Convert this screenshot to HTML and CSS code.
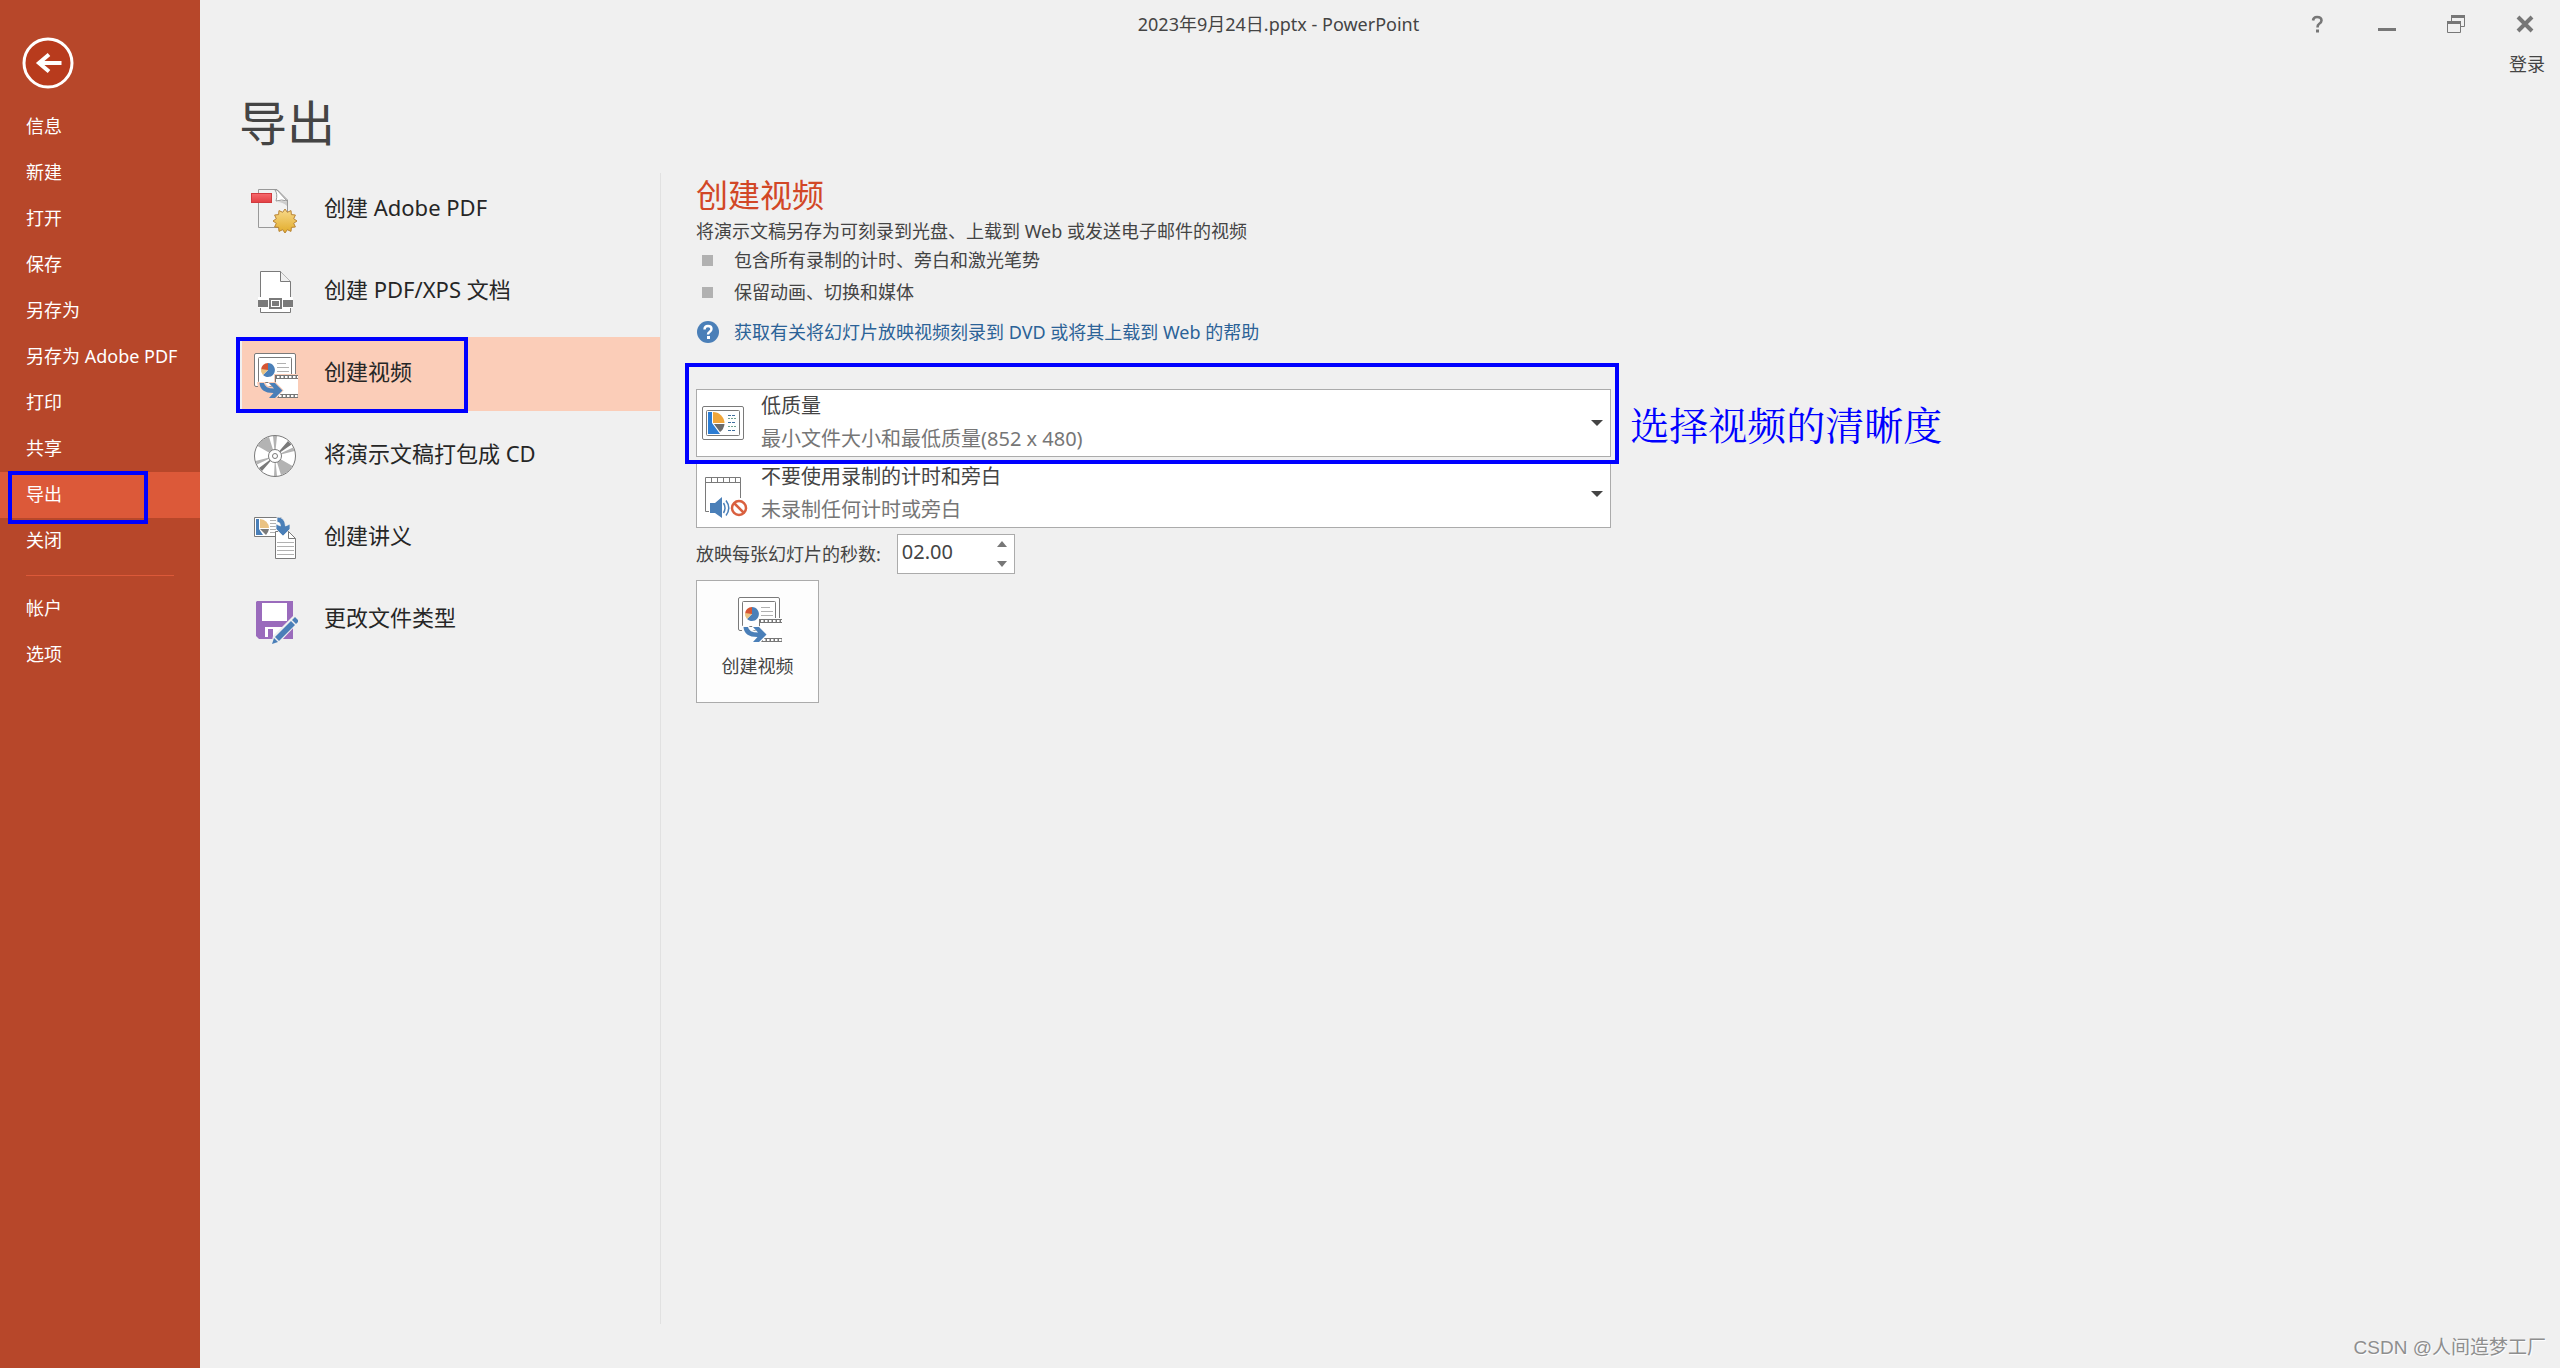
FILE: index.html
```html
<!DOCTYPE html>
<html lang="zh-CN">
  <head>
    <meta charset="UTF-8" />
    <meta name="viewport" content="width=device-width, initial-scale=1.0" />
    <title>2023年9月24日.pptx - PowerPoint</title>
    <link rel="stylesheet" href="styles.css">
  </head>
  <body>
    <!-- Shared icon: slide to film strip -->
    <svg class="sprite" aria-hidden="true">
      <symbol id="icon-video" viewBox="0 0 48 48">
        <g transform="translate(4 3)">
          <rect x="0.5" y="0.5" width="41" height="33" rx="1.5" fill="#fff" stroke="#7a7a7a" />
          <rect x="4.5" y="4.5" width="33" height="25" rx="1" fill="#fff" stroke="#7a7a7a" />
          <path d="M14 17V10A7 7 0 1 1 9 22z" fill="#4a7fb8" />
          <path d="M14 17H7A7 7 0 0 1 14 10z" fill="#d65532" />
          <path d="M14 17L9 22A7 7 0 0 1 7 16z" fill="#eac282" />
          <path d="M23 10.5h9M23 14.5h12M23 18.5h12" stroke="#b1b1b1" />
          <path d="M20 21h26v25H20z" fill="var(--halo)" />
          <path d="M4 29h7q1 5 8 5L14 29h8l8 8.500L22 46h-8l4-4Q5 42 4 29z" fill="var(--halo)" />
          <path d="M21 22h24v23H21z" fill="#777" />
          <path d="M22 26h22v15H22z" fill="#fff" />
          <path d="M23 24h21M25 43h19" stroke="#fff" stroke-width="2" stroke-dasharray="2.500 1.500" />
          <path d="M3 29H11Q12 34 18 34L14 29H21.500L30 37.500L22 46H13L17 41.500Q4 41 3 29z" fill="var(--halo)" />
          <path d="M23 29.500L30 37L23 44V41H44V27H23z" fill="#fff" />
          <path d="M5.500 30H10Q11 35.500 20 35.500L15 30H21L28.500 37.500L21 45H15L19.500 40Q6 40 5.500 30z" fill="#4a7fb8" />
        </g>
      </symbol>
    </svg>

    <nav class="sidebar">
      <button class="back" aria-label="返回">
        <svg viewBox="0 0 52 52">
          <circle cx="26" cy="26" r="24" fill="#b83b1d" stroke="#fff" stroke-width="3" />
          <path d="M39.500 26H16M27 17.500L17 26L27 34.500" fill="none" stroke="#fff" stroke-width="4" />
        </svg>
      </button>
      <a href="#">信息</a>
      <a href="#">新建</a>
      <a href="#">打开</a>
      <a href="#">保存</a>
      <a href="#">另存为</a>
      <a href="#">另存为 Adobe PDF</a>
      <a href="#">打印</a>
      <a href="#">共享</a>
      <a href="#" class="active">导出<i class="mark mark-nav"></i></a>
      <a href="#">关闭</a>
      <hr />
      <a href="#">帐户</a>
      <a href="#">选项</a>
    </nav>

    <div class="page">
      <header class="titlebar">
        <p class="file-name">2023年9月24日.pptx - PowerPoint</p>
        <div class="window-buttons">
          <button aria-label="帮助">
            <svg viewBox="0 0 18 18"><path d="M4 5.500Q4.500 2 8 2Q12.500 2 12.500 5.500Q12.500 7.500 10 9Q8.500 10 8.500 12.500" fill="none" stroke="#777" stroke-width="2.600" /><path d="M7 14.500h3v3H7z" fill="#777" /></svg>
          </button>
          <button aria-label="最小化">
            <svg viewBox="0 0 18 18"><path d="M0 13h18v3H0z" fill="#777" /></svg>
          </button>
          <button aria-label="还原">
            <svg viewBox="0 0 18 18"><path d="M4.500 6V0.500h13v11H14" fill="none" stroke="#777" /><path d="M4 0h14v3H4zM0 6h14v3H0z" fill="#777" /><path d="M0.500 6.500h13v11H0.500z" fill="none" stroke="#777" /></svg>
          </button>
          <button aria-label="关闭">
            <svg viewBox="0 0 18 18"><path d="M2 2L16 16M16 2L2 16" stroke="#777" stroke-width="4" /></svg>
          </button>
        </div>
        <a href="#" class="sign-in">登录</a>
      </header>

      <h1>导出</h1>

      <main class="content">
        <!-- Export types -->
        <div class="types">
          <button>
            <svg viewBox="0 0 48 48">
              <defs>
                <linearGradient id="gold" x2="0" y2="1"><stop stop-color="#f7d98b" /><stop offset="1" stop-color="#e2ac2a" /></linearGradient>
                <linearGradient id="red" x2="0" y2="1"><stop stop-color="#f7696c" /><stop offset="1" stop-color="#e23f43" /></linearGradient>
              </defs>
              <g transform="translate(1 3)">
                <path d="M7.500 0.500H26L36.500 11V38.500H7.500z" fill="#f1f1f1" stroke="#999" />
                <path d="M24 1Q27 5 25 12Q31 10 36 12L26 1z" fill="#fff" stroke="#999" />
                <path d="M26 13Q31 11 36 13V17Q32 13 26 13z" fill="#ccc" />
                <rect x="0.500" y="4.500" width="20" height="9" fill="url(#red)" stroke="#d13a3e" />
                <path d="M34 20l2.300 3.300 3.700-1.700.4 4 4 .4-1.700 3.700L46 32l-3.300 2.300 1.700 3.700-4 .4-.4 4-3.700-1.700L34 44l-2.300-3.300-3.700 1.700-.4-4-4-.4 1.700-3.700L22 32l3.300-2.300-1.700-3.700 4-.4.4-4 3.700 1.700z" fill="url(#gold)" stroke="#b98435" />
              </g>
            </svg>
            <span>创建 Adobe PDF</span>
          </button>
          <button>
            <svg viewBox="0 0 48 48">
              <g transform="translate(8 3)">
                <path d="M2.500 0.500H22.500L32.500 10.500V41.500H2.500z" fill="#fff" stroke="#7a7a7a" />
                <path d="M22.500 0.500V10.500H32.500" fill="#f0f0f0" stroke="#7a7a7a" />
                <path d="M0 26h35v11H0z" fill="#fff" />
                <path d="M0 29h10v7H0zM25 29h10v7H25z" fill="#7a7a7a" />
                <path d="M12 28h11v9H12z" fill="#fff" stroke="#7a7a7a" stroke-width="2" />
                <path d="M14 30h7v5h-7z" fill="#7a7a7a" />
              </g>
            </svg>
            <span>创建 PDF/XPS 文档</span>
          </button>
          <button class="selected">
            <svg><use href="#icon-video" /></svg>
            <span>创建视频</span>
            <i class="mark mark-type"></i>
          </button>
          <button>
            <svg viewBox="0 0 48 48">
              <g transform="translate(25 24)">
                <circle r="20.500" fill="#fff" />
                <path d="M0 0L-17.500-10A20 20 0 0 1-6-19zM0 0L17.500 10A20 20 0 0 1 6 19zM0 0L-2-20H2zM0 0L2 20H-1zM0 0L18-8.500 19.500-5zM0 0L-18 8.500-19.500 5z" fill="#b3b3b3" />
                <path d="M0 0L13-15 16.500-11.500zM0 0L-13 15-16 12z" fill="#7a7a7a" />
                <circle r="20.500" fill="none" stroke="#7a7a7a" />
                <circle r="6.500" fill="#fff" stroke="#7a7a7a" />
                <circle r="2.500" fill="#fff" stroke="#7a7a7a" />
              </g>
            </svg>
            <span>将演示文稿打包成 CD</span>
          </button>
          <button>
            <svg viewBox="0 0 48 48">
              <g transform="translate(4 3)">
                <path d="M0.500 0.500H27V19.500H0.500z" fill="#fff" stroke="#7a7a7a" />
                <path d="M2 2H5V12L9 18H2z" fill="#4a7fb8" />
                <path d="M6 2A9 9 0 0 1 15 11H6z" fill="#eac282" />
                <path d="M6 12H15Q14.500 15 12 18z" fill="#7a7a7a" />
                <path d="M16 3.500h6M16 6.500h6M16 9.500h6M16 12.500h6M16 15.500h6" stroke="#b1b1b1" />
                <path d="M21.500 14.500H34.500L41.500 21.500V41.500H21.500z" fill="#fff" stroke="#7a7a7a" />
                <path d="M34.500 14.500V21.500H41.500" fill="none" stroke="#7a7a7a" />
                <path d="M23 25.500h17M23 29.500h17M23 33.500h17M23 37.500h17" stroke="#b1b1b1" />
                <path d="M23 0Q31 0 31.500 9L36 7V12L29 19L22 12V7L26.500 9Q26.500 5 23 5z" fill="#4a7fb8" stroke="#f0f0f0" stroke-width="0.800" />
              </g>
            </svg>
            <span>创建讲义</span>
          </button>
          <button>
            <svg viewBox="0 0 48 48">
              <g transform="translate(6 5)">
                <path d="M1 0H37V38H3L0 35V1z" fill="#9a6bbc" />
                <path d="M6 2H31V20H6zM9 26H26V36H9z" fill="#fff" />
                <path d="M12 28h5v8h-5z" fill="#9a6bbc" />
                <path d="M15 44L17 35L37 15L44 20L24 41z" fill="#f0f0f0" />
                <path d="M16 43L18 37L22 41zM19 36L35 20L39 24L23 40zM36 19L39 16L43 20L40 23z" fill="#4a7fb8" />
              </g>
            </svg>
            <span>更改文件类型</span>
          </button>
        </div>

        <!-- Video settings -->
        <section class="settings">
          <h2>创建视频</h2>
          <p>将演示文稿另存为可刻录到光盘、上载到 Web 或发送电子邮件的视频</p>
          <ul>
            <li>包含所有录制的计时、旁白和激光笔势</li>
            <li>保留动画、切换和媒体</li>
          </ul>
          <a href="#" class="help">
            <svg viewBox="0 0 22 22"><circle cx="11" cy="11" r="11" fill="#4a7fb8" /><path d="M7.500 8.500Q7.500 5 11 5Q14.500 5 14.500 8Q14.500 9.500 12.500 11Q11 12 11 13.500" fill="none" stroke="#fff" stroke-width="2.400" /><path d="M10 15h3v3h-3z" fill="#fff" /></svg>
            获取有关将幻灯片放映视频刻录到 DVD 或将其上载到 Web 的帮助
          </a>

          <div class="combo">
            <svg class="combo-icon" viewBox="0 0 48 48">
              <g transform="translate(2 7)">
                <rect x="0.500" y="0.500" width="41" height="33" rx="1.500" fill="#fff" stroke="#7a7a7a" />
                <rect x="4.500" y="4.500" width="33" height="25" rx="1" fill="#fff" stroke="#7a7a7a" />
                <path d="M6 6H10V17L18 28H6z" fill="#2b7cd3" />
                <path d="M11 6A11.500 11.500 0 0 1 22.500 17H11z" fill="#f0a63a" />
                <path d="M12 18H22.500Q22 23 18 26z" fill="#6a6a6a" />
                <path d="M26 9.500h8M26 16.500h8M26 24.500h8" stroke="#3f6f9f" stroke-dasharray="3 1" />
                <path d="M26 12.500h8M26 20.500h8" stroke="#6fa08f" stroke-dasharray="2 1" />
              </g>
            </svg>
            <select id="quality" aria-label="视频质量">
              <option>低质量</option>
            </select>
            <label for="quality">最小文件大小和最低质量(852 x 480)</label>
            <svg class="arrow" viewBox="0 0 12 6"><path d="M0 0h12L6 6z" fill="#444" /></svg>
            <i class="mark mark-quality"></i>
            <span class="note">选择视频的清晰度</span>
          </div>

          <div class="combo">
            <svg class="combo-icon" viewBox="0 0 48 48">
              <g transform="translate(5 7)">
                <path d="M4 34.500H0.500V0.500H35.500V21" fill="#fff" stroke="#7a7a7a" />
                <path d="M0 5.500H36M6.500 0V6M12.500 0V6M18.500 0V6M24.500 0V6M30.500 0V6" stroke="#7a7a7a" fill="none" />
                <path d="M5 26h5L17 20V41L10 36H5z" fill="#4a7fb8" />
                <path d="M18.500 26Q21.500 31 18.500 36M21 23.500Q26.500 31 21 38.500" fill="none" stroke="#4a7fb8" stroke-width="1.500" />
                <circle cx="34" cy="31" r="7" fill="#fff" stroke="#d9603f" stroke-width="2.500" />
                <path d="M29 26L39 36" stroke="#d9603f" stroke-width="2.500" />
              </g>
            </svg>
            <select id="timings" aria-label="计时和旁白">
              <option>不要使用录制的计时和旁白</option>
            </select>
            <label for="timings">未录制任何计时或旁白</label>
            <svg class="arrow" viewBox="0 0 12 6"><path d="M0 0h12L6 6z" fill="#444" /></svg>
          </div>

          <div class="seconds">
            <label for="seconds">放映每张幻灯片的秒数:</label>
            <div class="spinner">
              <input id="seconds" type="text" value="02.00" />
              <div class="steps">
                <button aria-label="增加"><svg viewBox="0 0 10 6"><path d="M0 6h10L5 0z" fill="#777" /></svg></button>
                <button aria-label="减少"><svg viewBox="0 0 10 6"><path d="M0 0h10L5 6z" fill="#777" /></svg></button>
              </div>
            </div>
          </div>

          <button class="create">
            <svg><use href="#icon-video" /></svg>
            创建视频
          </button>
        </section>
      </main>
    </div>
    <p class="watermark">CSDN @人间造梦工厂</p>
  </body>
</html>
```
FILE: styles.css
```css
* {
  box-sizing: border-box;
  margin: 0;
  padding: 0;
}

body {
  --halo: #f0f0f0;
  display: flex;
  min-height: 100vh;
  background-color: #f0f0f0;
  color: #444;
  font-family: "Noto Sans", "Noto Sans CJK SC", sans-serif;
  font-size: 18px;
  line-height: 24px;
}

button,
input,
select {
  font: inherit;
  color: inherit;
  border: none;
  background: none;
}

a {
  color: inherit;
  text-decoration: none;
}

svg {
  display: block;
  flex: none;
}

.sprite {
  position: absolute;
  width: 0;
  height: 0;
}

/* Blue annotation frames */
.mark {
  position: absolute;
  border: 4px solid #0000ff;
  pointer-events: none;
}

/* Sidebar */
.sidebar {
  flex: none;
  width: 200px;
  padding-top: 37px;
  background-color: #b7472a;
  color: #fff;
}

.back {
  display: block;
  margin: 0 0 15px 22px;
}

.back svg {
  width: 52px;
  height: 52px;
}

.sidebar a {
  display: block;
  position: relative;
  padding: 0 0 2px 26px;
  line-height: 44px;
  white-space: nowrap;
}

.sidebar .active {
  background-color: #dc5939;
}

.mark-nav {
  left: 8px;
  top: -1px;
  width: 140px;
  height: 53px;
  z-index: 1;
}

.sidebar hr {
  margin: 11px 26px 10px;
  border: none;
  border-top: 1px solid #dc5939;
}

/* Page */
.page {
  flex: 1;
  display: flex;
  flex-direction: column;
  padding-bottom: 44px;
}

.titlebar {
  display: grid;
  grid-template-columns: 1fr auto;
  row-gap: 16px;
  padding: 12px 15px 0 0;
}

.file-name {
  margin-left: 48px;
  text-align: center;
}

.window-buttons {
  display: flex;
  gap: 51px;
  padding-right: 11px;
}

.window-buttons svg {
  width: 18px;
  height: 18px;
}

.sign-in {
  grid-column: 2;
  justify-self: end;
}

h1 {
  margin: 13px 0 16px 39px;
  font-size: 48px;
  line-height: 68px;
  font-weight: 400;
}

.content {
  flex: 1;
  display: flex;
}

/* Export types */
.types {
  display: flex;
  flex-direction: column;
  gap: 8px;
  width: 461px;
  padding-left: 42px;
  border-right: 1px solid #e1e1e1;
  color: #262626;
}

.types button {
  display: flex;
  align-items: center;
  gap: 26px;
  position: relative;
  height: 74px;
  padding-left: 8px;
  font-size: 22px;
}

.types svg,
.create svg {
  width: 48px;
  height: 48px;
}

.types span {
  padding-bottom: 7px;
}

.types .selected {
  --halo: #fbcdb8;
  background-color: #fbcdb8;
}

.mark-type {
  left: -6px;
  top: 0;
  width: 232px;
  height: 76px;
}

/* Settings */
.settings {
  flex: 1;
  padding-left: 35px;
}

h2 {
  margin-bottom: 2px;
  color: #d24726;
  font-size: 32px;
  line-height: 44px;
  font-weight: 400;
}

.settings ul {
  list-style: none;
  padding-top: 1px;
}

.settings li {
  display: flex;
  align-items: center;
  gap: 21px;
  padding-left: 6px;
  line-height: 32px;
}

.settings li::before {
  content: "";
  width: 11px;
  height: 11px;
  background-color: #b1b1b1;
}

.help {
  display: flex;
  align-items: center;
  gap: 15px;
  width: fit-content;
  margin: 12px 0 45px 1px;
  color: #2b6297;
}

.help svg {
  width: 22px;
  height: 22px;
}

.combo {
  display: grid;
  grid-template-columns: 48px 1fr 12px;
  grid-template-rows: 32px 34px;
  column-gap: 13px;
  align-items: center;
  position: relative;
  width: 49.1%;
  margin-bottom: 3px;
  padding: 0 7px 0 3px;
  border: 1px solid #ababab;
  background-color: #fff;
  font-size: 20px;
}

.combo-icon {
  grid-row: 1 / 3;
  width: 48px;
  height: 48px;
  overflow: visible;
}

.combo select {
  grid-column: 2;
  grid-row: 1;
  appearance: none;
}

.combo label {
  grid-column: 2;
  grid-row: 2;
  color: #767676;
}

.arrow {
  grid-column: 3;
  grid-row: 1 / 3;
  width: 12px;
  height: 6px;
}

.mark-quality {
  inset: -27px -9px -8px -12px;
  z-index: 1;
}

.note {
  position: absolute;
  left: 100%;
  top: 8px;
  margin-left: 20px;
  color: #0000ff;
  font-family: "Noto Serif CJK SC", "Noto Sans CJK SC", serif;
  font-size: 39px;
  line-height: 50px;
  white-space: nowrap;
}

.seconds {
  display: flex;
  align-items: center;
  gap: 16px;
  padding-top: 3px;
}

.spinner {
  display: flex;
  width: 118px;
  height: 40px;
  border: 1px solid #ababab;
  background-color: #fff;
}

.spinner input {
  flex: 1;
  min-width: 0;
  padding: 0 0 4px 4px;
  font-size: 20px;
}

.steps {
  display: flex;
  flex-direction: column;
  justify-content: space-between;
  padding: 6px 7px;
}

.steps svg {
  width: 10px;
  height: 6px;
}

.create {
  display: flex;
  flex-direction: column;
  align-items: center;
  gap: 12px;
  width: 123px;
  height: 123px;
  margin-top: 6px;
  padding-top: 13px;
  border: 1px solid #ababab;
  background-color: #fdfdfd;
  --halo: #fdfdfd;
}

.watermark {
  position: absolute;
  right: 14px;
  bottom: 8px;
  color: #8e8e8e;
  font-family: "Liberation Sans", "Noto Sans CJK SC", sans-serif;
  font-size: 19px;
  text-shadow: 1px 1px 1px #fff;
}
```
